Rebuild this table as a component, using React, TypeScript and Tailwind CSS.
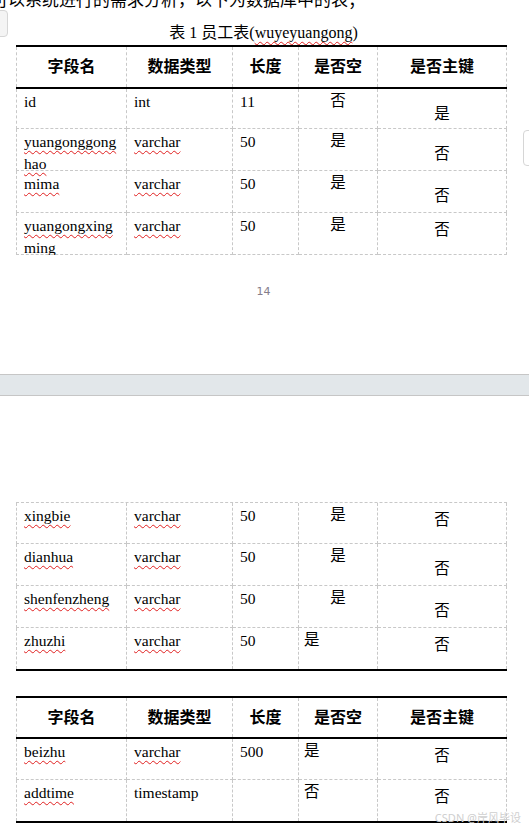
import React from "react";

type Row = {
  name: string;
  nameLines?: string[];
  type: string;
  len: string;
  isNull: string;
  nullLeft?: boolean;
  key: string;
  keyLow?: boolean;
  wavyType?: boolean;
  wavyName?: boolean;
  h: string;
  last?: boolean;
};

const cols = ["w-[111px]", "w-[106px]", "w-[66px]", "w-[79px]", "w-[129px]"];
const dash = "border-dashed border-[#c8c8c8]";
const wavy = "underline decoration-wavy decoration-[#e02020] decoration-1 underline-offset-[3px]";

const Header: React.FC<{ h: string }> = ({ h }) => (
  <div className={`flex ${h}`}>
    {["字段名", "数据类型", "长度", "是否空", "是否主键"].map((t, i) => (
      <div
        key={t}
        className={`${cols[i]} ${dash} border-r ${i === 0 ? "border-l" : ""} flex items-center justify-center font-bold text-[16px]`}
      >
        {t}
      </div>
    ))}
  </div>
);

const DataRow: React.FC<{ r: Row }> = ({ r }) => {
  const cell = `${dash} border-r ${r.last ? "" : "border-b"}`;
  return (
    <div className={`flex ${r.h} leading-[21px]`}>
      <div className={`${cols[0]} ${cell} border-l pl-[7px] pt-[2px]`}>
        {(r.nameLines ?? [r.name]).map((l, i) => (
          <div key={l} className={i > 0 ? "mt-[1px]" : ""}>
            <span className={r.wavyName === false ? "" : wavy}>{l}</span>
          </div>
        ))}
      </div>
      <div className={`${cols[1]} ${cell} pl-[7px] pt-[2px]`}>
        <span className={r.wavyType === false ? "" : wavy}>{r.type}</span>
      </div>
      <div className={`${cols[2]} ${cell} pl-[7px] pt-[2px]`}>{r.len}</div>
      <div className={`${cols[3]} ${cell} pt-[1px] ${r.nullLeft ? "pl-[5px]" : "text-center"}`}>
        {r.isNull}
      </div>
      <div className={`${cols[4]} ${cell} text-center ${r.keyLow ? "pt-[14px]" : "pt-[6px]"}`}>
        {r.key}
      </div>
    </div>
  );
};

const Line: React.FC = () => <div className="h-[2px] bg-black w-[491px]" />;

const page1: Row[] = [
  { name: "id", type: "int", len: "11", isNull: "否", key: "是", keyLow: true, wavyName: false, wavyType: false, h: "h-[40px]" },
  { name: "yuangonggonghao", nameLines: ["yuangonggong", "hao"], type: "varchar", len: "50", isNull: "是", key: "否", keyLow: true, h: "h-[42px]" },
  { name: "mima", type: "varchar", len: "50", isNull: "是", key: "否", keyLow: true, h: "h-[42px]" },
  { name: "yuangongxingming", nameLines: ["yuangongxing", "ming"], type: "varchar", len: "50", isNull: "是", key: "否", h: "h-[42px]" },
];

const page2: Row[] = [
  { name: "xingbie", type: "varchar", len: "50", isNull: "是", key: "否", h: "h-[41px]" },
  { name: "dianhua", type: "varchar", len: "50", isNull: "是", key: "否", keyLow: true, h: "h-[42px]" },
  { name: "shenfenzheng", type: "varchar", len: "50", isNull: "是", key: "否", keyLow: true, h: "h-[42px]" },
  { name: "zhuzhi", type: "varchar", len: "50", isNull: "是", nullLeft: true, key: "否", h: "h-[41px]", last: true },
];

const table3: Row[] = [
  { name: "beizhu", type: "varchar", len: "500", isNull: "是", nullLeft: true, key: "否", h: "h-[41px]" },
  { name: "addtime", type: "timestamp", len: "", isNull: "否", nullLeft: true, key: "否", wavyType: false, h: "h-[41px]", last: true },
];

export default function App() {
  return (
    <div className="w-[529px] h-[831px] bg-white overflow-hidden relative text-black text-[15.5px] font-['Liberation_Serif','Noto_Sans_CJK_SC',serif]">
      {/* page 1 */}
      <div className="h-[374px] flex flex-col">
        <div className="-mt-[9px] -ml-[9px] h-[20px] leading-[20px] text-[17px] whitespace-nowrap">
          可以系统进行的需求分析，以下为数据库中的表；
        </div>
        <div className="mt-[12px] h-[20px] leading-[20px] text-[16px] text-center pr-[2px]">
          表 1 员工表(<span className={wavy}>wuyeyuangong</span>)
        </div>
        <div className="mt-[2px] ml-[16px] h-[210px] overflow-hidden">
          <Line />
          <Header h="h-[40px]" />
          <Line />
          {page1.map((r) => (
            <DataRow key={r.name} r={r} />
          ))}
        </div>
        <div className="mt-[30px] text-center text-[11px] leading-[14px] text-[#857d8a] font-['DejaVu_Sans',sans-serif] pr-[2px]">
          14
        </div>
      </div>

      {/* page gap */}
      <div className="h-[22px] border-y border-[#c6c6c6] bg-[#e2e7ea]" />

      {/* page 2 */}
      <div className="pt-[106px] pl-[16px]">
        <div className={`w-[491px] border-t ${dash}`}>
          {page2.map((r) => (
            <DataRow key={r.name} r={r} />
          ))}
        </div>
        <Line />
        <div className="mt-[25px]">
          <Line />
          <Header h="h-[39px]" />
          <Line />
          {table3.map((r) => (
            <DataRow key={r.name} r={r} />
          ))}
          <Line />
        </div>
      </div>

      {/* side tabs */}
      <div className="absolute left-[-6px] top-[10px] w-[14px] h-[27px] rounded-[4px] border border-[#d6d6d6] bg-[#f4f4f4]" />
      <div className="absolute left-[523px] top-[130px] w-[14px] h-[36px] rounded-[4px] border border-[#d6d6d6] bg-white" />

      {/* watermark */}
      <div className="absolute right-[8px] top-[811px] text-[11px] leading-[14px] text-[#cfcfcf] font-['Noto_Sans','Noto_Sans_CJK_SC',sans-serif]">
        CSDN @岸风毕设
      </div>
    </div>
  );
}
